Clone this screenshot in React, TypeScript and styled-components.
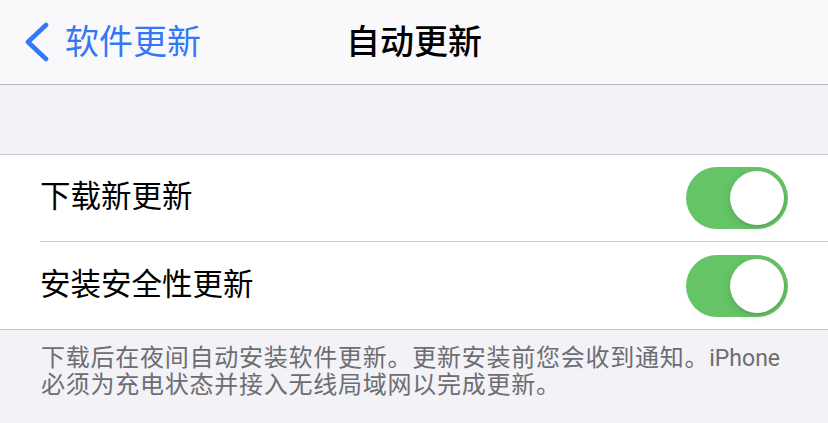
import React, { useState } from 'react'
import styled, { createGlobalStyle } from 'styled-components'

const GlobalStyle = createGlobalStyle`
  html, body {
    margin: 0;
    padding: 0;
    background: #f2f2f7;
  }
  body {
    font-family: "Noto Sans CJK SC", "Noto Sans", sans-serif;
    -webkit-font-smoothing: antialiased;
  }
`

const Page = styled.div`
  width: 828px;
  height: 423px;
  background: #f2f2f7;
  overflow: hidden;
`

const NavBar = styled.header`
  height: 84px;
  display: grid;
  grid-template-columns: 1fr auto 1fr;
  align-items: center;
  background: #f9f9fb;
  border-bottom: 1px solid #b4b4b8;
`

const BackButton = styled.button`
  justify-self: start;
  display: flex;
  align-items: center;
  gap: 15px;
  margin: 0;
  padding: 0 0 0 24px;
  border: none;
  background: none;
  color: #3478f6;
  font-family: inherit;
  font-size: 34px;
  line-height: 1;
  cursor: pointer;
`

const BackLabel = styled.span`
  margin-top: -5px;
`

const Title = styled.h1`
  margin: -5px 0 0;
  font-size: 34px;
  font-weight: 500;
  line-height: 1;
  color: #000;
`

const Spacer = styled.div`
  height: 69px;
`

const Group = styled.section`
  background: #fff;
  border-top: 1px solid #c8c8cc;
  border-bottom: 1px solid #c8c8cc;
`

const Row = styled.div`
  padding-left: 40px;
`

const RowInner = styled.div<{ $last?: boolean; $h: number }>`
  height: ${(p) => p.$h}px;
  display: flex;
  align-items: center;
  justify-content: space-between;
  padding-right: 40px;
  border-bottom: ${(p) => (p.$last ? 'none' : '1px solid #c8c8cc')};
`

const RowLabel = styled.span`
  margin-top: -7px;
  font-size: 30.5px;
  color: #000;
  line-height: 1;
`

const Switch = styled.button<{ $on: boolean }>`
  position: relative;
  width: 102px;
  height: 62px;
  margin: 0;
  padding: 0;
  border: none;
  border-radius: 31px;
  background: ${(p) => (p.$on ? '#65c466' : '#e9e9eb')};
  cursor: pointer;
  flex-shrink: 0;
`

const Knob = styled.span<{ $on: boolean }>`
  position: absolute;
  top: 4px;
  left: ${(p) => (p.$on ? '44px' : '4px')};
  width: 54px;
  height: 54px;
  border-radius: 50%;
  background: #fff;
  box-shadow: 0 3px 8px rgba(0, 0, 0, 0.12), 0 1px 2px rgba(0, 0, 0, 0.1);
`

const Footer = styled.div`
  padding: 12px 30px 0 41px;
  color: #6d6d72;
`

const FooterLine = styled.div`
  height: 27px;
  font-size: 24px;
  letter-spacing: 0.75px;
  line-height: 27px;
  white-space: nowrap;
  overflow: visible;
`

const Latin = styled.span`
  font-family: Roboto, "Noto Sans", sans-serif;
  font-size: 23px;
  letter-spacing: 0;
`

const Chevron = () => (
  <svg width="26" height="40" viewBox="0 0 26 40" fill="none">
    <polyline
      points="22,3 4,20 22,37"
      stroke="#3478f6"
      strokeWidth="4.6"
      strokeLinecap="round"
      strokeLinejoin="round"
    />
  </svg>
)

const rows = [
  { label: '下载新更新', h: 86 },
  { label: '安装安全性更新', h: 87 },
]

export default function App() {
  const [on, setOn] = useState([true, true])

  return (
    <Page>
      <GlobalStyle />
      <NavBar>
        <BackButton>
          <Chevron />
          <BackLabel>软件更新</BackLabel>
        </BackButton>
        <Title>自动更新</Title>
        <div />
      </NavBar>
      <Spacer />
      <Group>
        {rows.map((r, i) => (
          <Row key={r.label}>
            <RowInner $h={r.h} $last={i === rows.length - 1}>
              <RowLabel>{r.label}</RowLabel>
              <Switch
                $on={on[i]}
                onClick={() => setOn(on.map((v, j) => (j === i ? !v : v)))}
              >
                <Knob $on={on[i]} />
              </Switch>
            </RowInner>
          </Row>
        ))}
      </Group>
      <Footer>
        <FooterLine>
          下载后在夜间自动安装软件更新。更新安装前您会收到通知。<Latin>iPhone</Latin>
        </FooterLine>
        <FooterLine>必须为充电状态并接入无线局域网以完成更新。</FooterLine>
      </Footer>
    </Page>
  )
}
